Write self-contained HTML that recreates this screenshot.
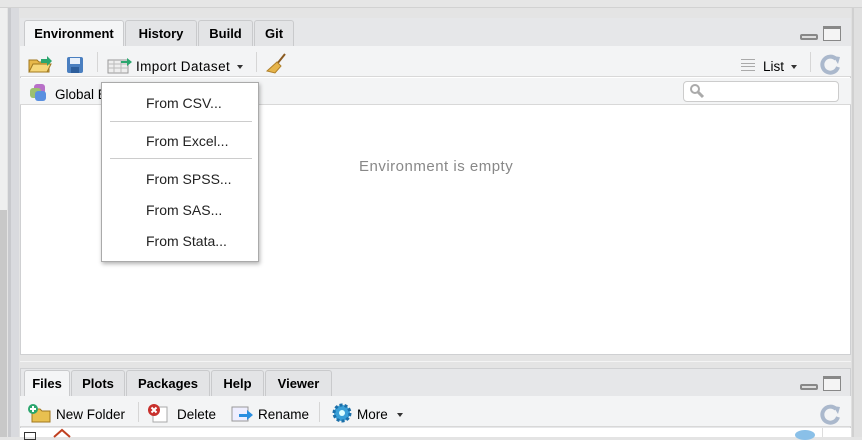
<!DOCTYPE html>
<html><head><style>
*{margin:0;padding:0;box-sizing:border-box}
body{width:862px;height:437px;overflow:hidden;background:#e4e4e4;font-family:"Liberation Sans",sans-serif;font-size:13px;position:relative;color:#000}
.a{position:absolute}
.tab{position:absolute;height:26px;background:#e3e4e6;border:1px solid #c9cacc;border-bottom:none;border-radius:3px 3px 0 0;font-weight:bold;font-size:13px;line-height:25px;text-align:center}
.tab.on{background:#f4f5f6}
.t{position:absolute;font-size:13.5px}
.mi{position:absolute;left:44px;font-size:14px;color:#222}
.sep{position:absolute;width:1px;background:#d6d6d6}
.dd{position:absolute;width:0;height:0;border-left:3.5px solid transparent;border-right:3.5px solid transparent;border-top:4px solid #333}
</style></head><body>
<div class="a" style="left:0;top:0;width:862px;height:7px;background:#e6e6e6"></div>
<div class="a" style="left:0;top:7px;width:862px;height:1px;background:#d2d2d2"></div>
<div class="a" style="left:0;top:8px;width:7px;height:429px;background:#efefef"></div>
<div class="a" style="left:0;top:210px;width:7px;height:227px;background:#c8c8c8"></div>
<div class="a" style="left:8px;top:8px;width:3px;height:429px;background:#c8c9cd"></div>
<div class="a" style="left:11px;top:8px;width:8px;height:429px;background:#d9dade"></div>
<div class="a" style="left:851px;top:8px;width:11px;height:429px;background:#e0e0e0"></div>
<div class="a" style="left:852px;top:8px;width:2px;height:429px;background:#d0d0d0"></div>
<div class="a" style="left:20px;top:18px;width:831px;height:337px;background:#fff;border:1px solid #cfd0d2"></div>
<div class="a" style="left:20px;top:18px;width:831px;height:28px;background:#e6e7e9"></div>
<div class="tab on" style="left:24px;top:20px;width:100px">Environment</div>
<div class="tab" style="left:125px;top:20px;width:72px">History</div>
<div class="tab" style="left:198px;top:20px;width:55px">Build</div>
<div class="tab" style="left:254px;top:20px;width:40px">Git</div>
<div class="a" style="left:800px;top:34px;width:18px;height:6px;border:2px solid #888;border-radius:2px;background:#ddd"></div>
<div class="a" style="left:823px;top:26px;width:18px;height:15px;border:1px solid #888;border-top-width:3px;background:#f4f4f4"></div>
<div class="a" style="left:20px;top:46px;width:831px;height:31px;background:#f3f4f5;border-bottom:1px solid #d8d8d8"></div>
<svg class="a" style="left:27px;top:54px" width="28" height="20"><path d="M2 6h8l2 2h10v10H2z" fill="#e8b84a" stroke="#a07820"/><path d="M2 18l4-8h18l-4 8z" fill="#f6d77a" stroke="#a07820"/><path d="M14 5h6V2l5 5-5 5V9h-6z" fill="#2ba66e"/></svg>
<svg class="a" style="left:66px;top:56px" width="18" height="18"><rect x="1" y="1" width="16" height="16" rx="2" fill="#4a7fc0"/><rect x="4" y="2" width="10" height="6" fill="#e8f0fa"/><rect x="5" y="11" width="8" height="6" fill="#2d5e9c"/></svg>
<div class="sep" style="left:97px;top:52px;height:20px"></div>
<svg class="a" style="left:107px;top:56px" width="28" height="18"><rect x="1" y="4" width="20" height="13" fill="#eee" stroke="#999"/><path d="M1 8h20M1 12h20M7 4v13M14 4v13" stroke="#bbb"/><path d="M14 5h6V2l5 4-5 4V7h-6z" fill="#2ba66e"/></svg>
<div class="t" style="left:136px;top:59px;letter-spacing:0.4px">Import Dataset</div>
<div class="dd" style="left:237px;top:65px"></div>
<div class="sep" style="left:256px;top:52px;height:20px"></div>
<svg class="a" style="left:265px;top:52px" width="24" height="22"><path d="M20 2L12 12" stroke="#8a5a20" stroke-width="2"/><path d="M12 10l4 4-6 7-8-2z" fill="#e6b44a" stroke="#b0802a"/></svg>
<div class="a" style="left:741px;top:59px;width:14px;height:12px;border-top:1px solid #aaa;border-bottom:1px solid #aaa"></div>
<div class="a" style="left:741px;top:63px;width:14px;height:4px;border-top:1px solid #aaa;border-bottom:1px solid #aaa"></div>
<div class="t" style="left:763px;top:59px">List</div>
<div class="dd" style="left:791px;top:65px"></div>
<div class="sep" style="left:810px;top:52px;height:20px"></div>
<svg class="a" style="left:820px;top:53px" width="22" height="22"><path d="M16 6A8 8 0 1 0 18 14" fill="none" stroke="#aab8cc" stroke-width="4"/><path d="M13 3l7 1-2 7z" fill="#aab8cc"/></svg>
<div class="a" style="left:20px;top:78px;width:831px;height:27px;background:#f3f4f5;border-bottom:1px solid #d8d8d8"></div>
<svg class="a" style="left:28px;top:83px" width="22" height="20"><rect x="6" y="1" width="11" height="10" rx="3" fill="#b870c8"/><rect x="2" y="5" width="11" height="10" rx="3" fill="#9cc070"/><rect x="7" y="8" width="11" height="10" rx="3" fill="#5a90e0"/></svg>
<div class="t" style="left:55px;top:87px">Global E</div>
<div class="a" style="left:683px;top:81px;width:156px;height:21px;background:#fff;border:1px solid #ccc;border-radius:4px"></div>
<svg class="a" style="left:689px;top:83px" width="16" height="16"><circle cx="6" cy="6" r="4" fill="none" stroke="#aaa" stroke-width="2"/><path d="M9 9l5 5" stroke="#aaa" stroke-width="3"/></svg>
<div class="t" style="left:359px;top:158px;font-size:15px;letter-spacing:0.5px;color:#888">Environment is empty</div>
<div class="a" style="left:20px;top:356px;width:831px;height:12px;background:#e4e4e4"></div>
<div class="a" style="left:20px;top:361px;width:831px;height:1px;background:#f4f4f4"></div>
<div class="a" style="left:20px;top:368px;width:831px;height:69px;background:#e6e7e9;border:1px solid #cfd0d2"></div>
<div class="tab on" style="left:24px;top:370px;width:46px">Files</div>
<div class="tab" style="left:71px;top:370px;width:54px">Plots</div>
<div class="tab" style="left:126px;top:370px;width:84px">Packages</div>
<div class="tab" style="left:211px;top:370px;width:53px">Help</div>
<div class="tab" style="left:265px;top:370px;width:67px">Viewer</div>
<div class="a" style="left:800px;top:384px;width:18px;height:6px;border:2px solid #888;border-radius:2px;background:#ddd"></div>
<div class="a" style="left:823px;top:376px;width:18px;height:15px;border:1px solid #888;border-top-width:3px;background:#f4f4f4"></div>
<div class="a" style="left:20px;top:396px;width:831px;height:31px;background:#f3f4f5;border-bottom:1px solid #d8d8d8"></div>
<svg class="a" style="left:26px;top:403px" width="26" height="20"><path d="M6 6h8l2 2h8v11H6z" fill="#e8c050" stroke="#a07820"/><circle cx="7" cy="6" r="5" fill="#2ba66e"/><path d="M7 3v6M4 6h6" stroke="#fff" stroke-width="2"/></svg>
<div class="t" style="left:56px;top:407px">New Folder</div>
<div class="sep" style="left:138px;top:402px;height:20px"></div>
<svg class="a" style="left:147px;top:403px" width="26" height="20"><rect x="6" y="4" width="14" height="15" fill="#fff" stroke="#aaa"/><circle cx="7" cy="7" r="6" fill="#c8302c"/><path d="M4.5 4.5l5 5M9.5 4.5l-5 5" stroke="#fff" stroke-width="2"/></svg>
<div class="t" style="left:177px;top:407px">Delete</div>
<svg class="a" style="left:231px;top:404px" width="24" height="20"><rect x="1" y="3" width="16" height="14" fill="#eef" stroke="#999"/><path d="M8 10h8V6l6 5-6 5v-3H8z" fill="#2a8ee0"/></svg>
<div class="t" style="left:258px;top:407px">Rename</div>
<div class="sep" style="left:319px;top:402px;height:20px"></div>
<svg class="a" style="left:331px;top:402px" width="22" height="22"><circle cx="11" cy="11" r="8" fill="#3aa0d8" stroke="#1c6fa8" stroke-width="3" stroke-dasharray="3 2"/><circle cx="11" cy="11" r="3" fill="#dff"/></svg>
<div class="t" style="left:357px;top:407px">More</div>
<div class="dd" style="left:397px;top:413px"></div>
<svg class="a" style="left:820px;top:403px" width="22" height="22"><path d="M16 6A8 8 0 1 0 18 14" fill="none" stroke="#aab8cc" stroke-width="4"/><path d="M13 3l7 1-2 7z" fill="#aab8cc"/></svg>
<div class="a" style="left:20px;top:428px;width:831px;height:9px;background:#fff"></div>
<div class="a" style="left:24px;top:432px;width:12px;height:8px;border:1px solid #333"></div>
<svg class="a" style="left:52px;top:428px" width="20" height="10"><path d="M2 9L10 2l8 7" fill="none" stroke="#c04020" stroke-width="2"/></svg>
<div class="a" style="left:795px;top:430px;width:20px;height:10px;border-radius:50%;background:#8ac0e8"></div>
<div class="a" style="left:822px;top:428px;width:1px;height:9px;background:#ddd"></div>
<div class="a" style="left:101px;top:82px;width:158px;height:180px;background:#fff;border:1px solid #aaa;box-shadow:1px 2px 4px rgba(0,0,0,.3)">
<div class="mi" style="top:12px">From CSV...</div>
<div class="a" style="left:8px;top:38px;width:142px;height:1px;background:#ccc"></div>
<div class="mi" style="top:50px">From Excel...</div>
<div class="a" style="left:8px;top:75px;width:142px;height:1px;background:#ccc"></div>
<div class="mi" style="top:88px">From SPSS...</div>
<div class="mi" style="top:119px">From SAS...</div>
<div class="mi" style="top:150px">From Stata...</div>
</div>
</body></html>
